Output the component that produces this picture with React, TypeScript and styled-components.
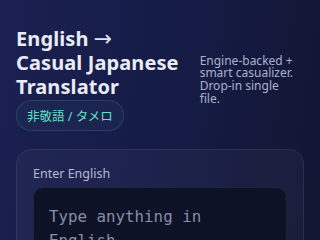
import React from "react";
import styled, { createGlobalStyle } from "styled-components";

const Global = createGlobalStyle`
  html, body { margin: 0; padding: 0; }
  body {
    width: 320px;
    min-height: 240px;
    overflow: hidden;
    background: linear-gradient(100deg, #1b2050 0%, #161c48 45%, #111630 100%);
    font-family: "Noto Sans", "Noto Sans CJK JP", sans-serif;
    color: #e8ebf5;
  }
`;

const Page = styled.div`
  padding: 27px 16px 16px;
  display: flex;
  flex-direction: column;
  gap: 18px;
`;

const Header = styled.header`
  display: flex;
  align-items: center;
  justify-content: flex-start;
  gap: 21px;
`;

const TitleBlock = styled.div`
  display: flex;
  flex-direction: column;
  align-items: flex-start;
  gap: 1px;
`;

const Title = styled.h1`
  margin: 0;
  font-size: 20px;
  line-height: 24px;
  font-weight: 700;
  color: #e9ecf7;
  letter-spacing: 0.1px;
`;

const Arrow = styled.span`
  font-family: "DejaVu Sans", sans-serif;
  font-weight: 400;
  font-size: 22px;
  line-height: 0;
  color: #dfe3f2;
`;

const Badge = styled.span`
  display: inline-flex;
  align-items: center;
  height: 29px;
  padding: 0 10px;
  border-radius: 999px;
  border: 1px solid rgba(94, 224, 192, 0.16);
  background: rgba(94, 224, 192, 0.04);
  color: #5fe3c4;
  font-size: 12.5px;
  font-family: "Noto Sans", "Noto Sans CJK JP", sans-serif;
`;

const Tagline = styled.p`
  margin: 2px 0 0;
  width: 101px;
  font-size: 12px;
  line-height: 12.7px;
  color: #aab1cf;
`;

const Card = styled.section`
  border-radius: 16px;
  border: 1px solid rgba(255, 255, 255, 0.08);
  background: rgba(255, 255, 255, 0.03);
  padding: 16px;
  display: flex;
  flex-direction: column;
  gap: 5px;
`;

const Label = styled.label`
  font-size: 12.5px;
  line-height: 16px;
  color: #b4bad6;
`;

const Input = styled.textarea`
  box-sizing: border-box;
  width: 100%;
  height: 120px;
  resize: none;
  border-radius: 10px;
  border: 1px solid rgba(255, 255, 255, 0.08);
  background: #0e1226;
  padding: 17px 15px;
  font-family: "DejaVu Sans Mono", monospace;
  font-size: 15.8px;
  line-height: 24px;
  color: #e8ebf5;
  outline: none;
  &::placeholder { color: #878da6; }
`;

export default function App() {
  return (
    <>
      <Global />
      <Page>
        <Header>
          <TitleBlock>
            <Title>English <Arrow>→</Arrow><br />Casual Japanese<br />Translator</Title>
            <Badge>非敬語 / タメロ</Badge>
          </TitleBlock>
          <Tagline>Engine-backed + smart casualizer. Drop-in single file.</Tagline>
        </Header>
        <Card>
          <Label>Enter English</Label>
          <Input placeholder="Type anything in English" />
        </Card>
      </Page>
    </>
  );
}
